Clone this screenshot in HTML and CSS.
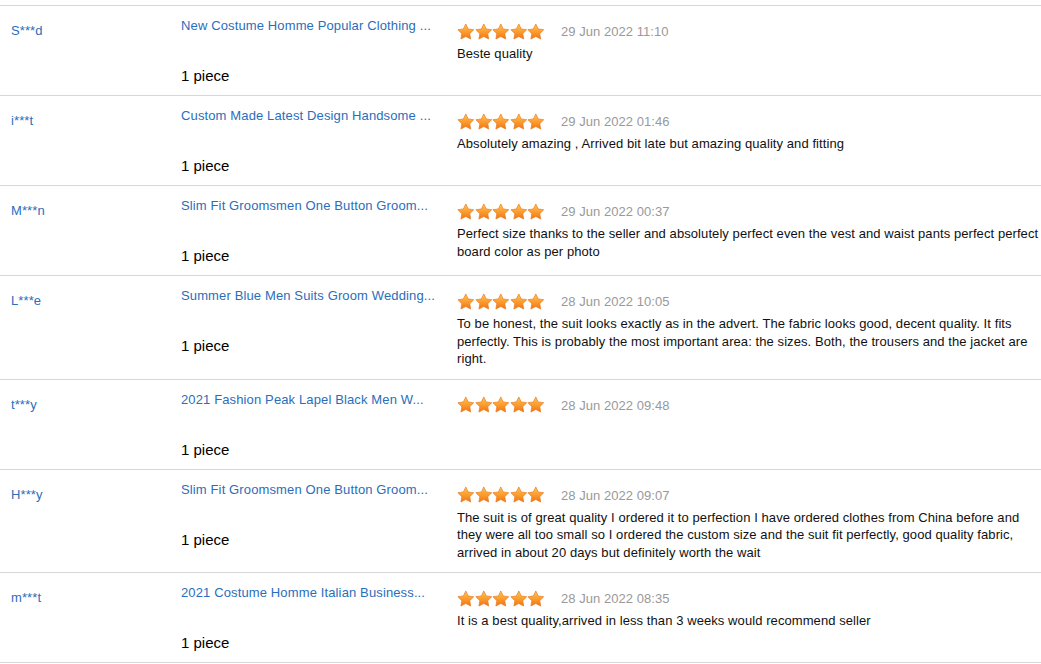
FILE: index.html
```html
<!DOCTYPE html>
<html lang="en">
<head>
<meta charset="utf-8">
<title>Feedback</title>
<link rel="stylesheet" href="styles.css">
</head>
<body>
<svg class="defs" width="0" height="0" aria-hidden="true">
  <defs>
    <linearGradient id="sg" x1="0" y1="0" x2="0" y2="1">
      <stop offset="0" stop-color="#ffc652"/>
      <stop offset="0.55" stop-color="#fb9a2c"/>
      <stop offset="1" stop-color="#ef7414"/>
    </linearGradient>
    <symbol id="star" viewBox="0 0 24 23">
      <path d="M12 1.2l3.3 6.8 7.5 1.1-5.4 5.3 1.3 7.4L12 18.3l-6.7 3.5 1.3-7.4-5.4-5.3 7.5-1.1z" fill="url(#sg)" stroke="#e8761c" stroke-width="0.9" stroke-linejoin="round"/>
    </symbol>
  </defs>
</svg>

<div class="list">
  <div class="row">
    <div class="user"><a href="#">S***d</a></div>
    <div class="product"><a href="#" class="title">New Costume Homme Popular Clothing ...</a><div class="qty">1 piece</div></div>
    <div class="review">
      <div class="meta"><span class="stars"><svg><use href="#star"/></svg><svg><use href="#star"/></svg><svg><use href="#star"/></svg><svg><use href="#star"/></svg><svg><use href="#star"/></svg></span><span class="date">29 Jun 2022 11:10</span></div>
      <p class="comment">Beste quality</p>
    </div>
  </div>
  <div class="row">
    <div class="user"><a href="#">i***t</a></div>
    <div class="product"><a href="#" class="title">Custom Made Latest Design Handsome ...</a><div class="qty">1 piece</div></div>
    <div class="review">
      <div class="meta"><span class="stars"><svg><use href="#star"/></svg><svg><use href="#star"/></svg><svg><use href="#star"/></svg><svg><use href="#star"/></svg><svg><use href="#star"/></svg></span><span class="date">29 Jun 2022 01:46</span></div>
      <p class="comment">Absolutely amazing , Arrived bit late but amazing quality and fitting</p>
    </div>
  </div>
  <div class="row">
    <div class="user"><a href="#">M***n</a></div>
    <div class="product"><a href="#" class="title">Slim Fit Groomsmen One Button Groom...</a><div class="qty">1 piece</div></div>
    <div class="review">
      <div class="meta"><span class="stars"><svg><use href="#star"/></svg><svg><use href="#star"/></svg><svg><use href="#star"/></svg><svg><use href="#star"/></svg><svg><use href="#star"/></svg></span><span class="date">29 Jun 2022 00:37</span></div>
      <p class="comment">Perfect size thanks to the seller and absolutely perfect even the vest and waist pants perfect perfect board color as per photo</p>
    </div>
  </div>
  <div class="row">
    <div class="user"><a href="#">L***e</a></div>
    <div class="product"><a href="#" class="title">Summer Blue Men Suits Groom Wedding...</a><div class="qty">1 piece</div></div>
    <div class="review">
      <div class="meta"><span class="stars"><svg><use href="#star"/></svg><svg><use href="#star"/></svg><svg><use href="#star"/></svg><svg><use href="#star"/></svg><svg><use href="#star"/></svg></span><span class="date">28 Jun 2022 10:05</span></div>
      <p class="comment">To be honest, the suit looks exactly as in the advert. The fabric looks good, decent quality. It fits perfectly. This is probably the most important area: the sizes. Both, the trousers and the jacket are right.</p>
    </div>
  </div>
  <div class="row">
    <div class="user"><a href="#">t***y</a></div>
    <div class="product"><a href="#" class="title">2021 Fashion Peak Lapel Black Men W...</a><div class="qty">1 piece</div></div>
    <div class="review">
      <div class="meta"><span class="stars"><svg><use href="#star"/></svg><svg><use href="#star"/></svg><svg><use href="#star"/></svg><svg><use href="#star"/></svg><svg><use href="#star"/></svg></span><span class="date">28 Jun 2022 09:48</span></div>
      <p class="comment"></p>
    </div>
  </div>
  <div class="row">
    <div class="user"><a href="#">H***y</a></div>
    <div class="product"><a href="#" class="title">Slim Fit Groomsmen One Button Groom...</a><div class="qty">1 piece</div></div>
    <div class="review">
      <div class="meta"><span class="stars"><svg><use href="#star"/></svg><svg><use href="#star"/></svg><svg><use href="#star"/></svg><svg><use href="#star"/></svg><svg><use href="#star"/></svg></span><span class="date">28 Jun 2022 09:07</span></div>
      <p class="comment">The suit is of great quality I ordered it to perfection I have ordered clothes from China before and they were all too small so I ordered the custom size and the suit fit perfectly, good quality fabric, arrived in about 20 days but definitely worth the wait</p>
    </div>
  </div>
  <div class="row">
    <div class="user"><a href="#">m***t</a></div>
    <div class="product"><a href="#" class="title">2021 Costume Homme Italian Business...</a><div class="qty">1 piece</div></div>
    <div class="review">
      <div class="meta"><span class="stars"><svg><use href="#star"/></svg><svg><use href="#star"/></svg><svg><use href="#star"/></svg><svg><use href="#star"/></svg><svg><use href="#star"/></svg></span><span class="date">28 Jun 2022 08:35</span></div>
      <p class="comment">It is a best quality,arrived in less than 3 weeks would recommend seller</p>
    </div>
  </div>
</div>
</body>
</html>
```
FILE: styles.css
```css
html, body {
  margin: 0;
  padding: 0;
  background: #fff;
}
body {
  font-family: "Liberation Sans", Arial, sans-serif;
  color: #000;
  overflow: hidden;
}
.defs {
  position: absolute;
  width: 0;
  height: 0;
}
.list {
  margin-top: 5px;
  border-top: 1px solid #d8d8d8;
}
.row {
  display: flex;
  border-bottom: 1px solid #d8d8d8;
}
a {
  color: #2a6ebb;
  text-decoration: none;
}
.user {
  width: 170px;
  padding: 16px 0 0 11px;
  font-size: 13px;
  line-height: 18px;
  letter-spacing: 0.1px;
}
.product {
  width: 276px;
  padding: 11px 0 10px 0;
  display: flex;
  flex-direction: column;
  align-items: flex-start;
}
.title {
  font-size: 13px;
  line-height: 18px;
  white-space: nowrap;
  letter-spacing: 0.13px;
}
.qty {
  margin-top: 32px;
  font-size: 15px;
  line-height: 18px;
  color: #000;
}
.review {
  flex: 1;
  padding: 15px 0 11px 0;
}
.meta {
  height: 20px;
  display: flex;
  align-items: center;
}
.stars {
  display: flex;
  width: 88px;
}
.stars svg {
  width: 17.6px;
  height: 17px;
  display: block;
}
.date {
  margin-left: 16px;
  padding-top: 2px;
  font-size: 13px;
  color: #999;
  line-height: 18px;
  letter-spacing: 0.05px;
}
.comment {
  margin: 4px 0 0 0;
  font-size: 13px;
  line-height: 17.5px;
  color: #111;
  letter-spacing: 0.08px;
}
```
